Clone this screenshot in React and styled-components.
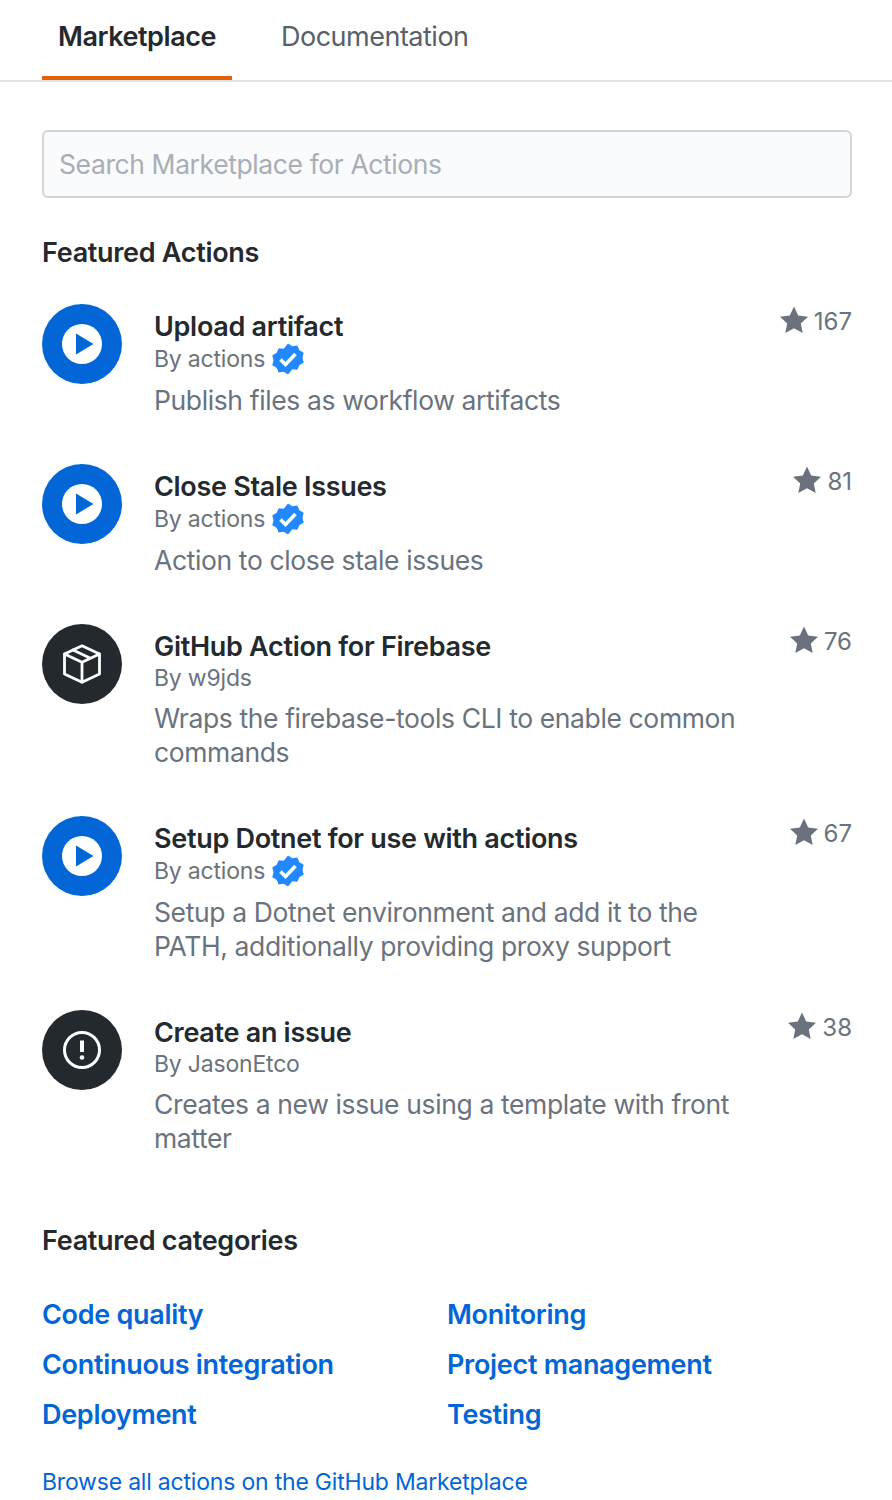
import React from "react";
import styled, { createGlobalStyle } from "styled-components";

const actions = [
  { title: "Upload artifact", by: "actions", verified: true, icon: "play", stars: 167, desc: "Publish files as workflow artifacts" },
  { title: "Close Stale Issues", by: "actions", verified: true, icon: "play", stars: 81, desc: "Action to close stale issues" },
  { title: "GitHub Action for Firebase", by: "w9jds", icon: "package", stars: 76, desc: "Wraps the firebase-tools CLI to enable common commands" },
  { title: "Setup Dotnet for use with actions", by: "actions", verified: true, icon: "play", stars: 67, desc: "Setup a Dotnet environment and add it to the PATH, additionally providing proxy support" },
  { title: "Create an issue", by: "JasonEtco", icon: "issue", stars: 38, desc: "Creates a new issue using a template with front matter" },
];

const categories = ["Code quality", "Monitoring", "Continuous integration", "Project management", "Deployment", "Testing"];

const PlayIcon = () => (
  <svg width="40" height="40" viewBox="0 0 40 40">
    <circle cx="20" cy="20" r="20" fill="#fff" />
    <path d="M14 9.500v21L31.500 20z" fill="#0366d6" />
  </svg>
);

const PackageIcon = () => (
  <svg width="40" height="40" viewBox="0 0 40 40" fill="none" stroke="#fff" strokeWidth="2.800" strokeLinejoin="round" strokeLinecap="round">
    <path d="M20 1.800 37.500 10v20L20 38.200 2.500 30V10z" />
    <path d="M2.500 10 20 18.200 37.500 10M20 18.200v20M11 6l17.500 8.200" />
  </svg>
);

const IssueIcon = () => (
  <svg width="40" height="40" viewBox="0 0 40 40" fill="none">
    <circle cx="20" cy="20" r="17.500" stroke="#fff" strokeWidth="3" />
    <path d="M20 10.500v11.500" stroke="#fff" strokeWidth="4" />
    <circle cx="20" cy="27.500" r="2.300" fill="#fff" />
  </svg>
);

const Verified = () => (
  <svg width="32" height="32" viewBox="0 0 32 32">
    <path
      d="M16 .5l4.300 2.700 5-.6 2.100 4.600 4.300 2.600-1.200 4.900 1.200 4.900-4.300 2.600-2.100 4.600-5-.6L16 31.500l-4.300-2.700-5 .6-2.100-4.600L.3 22.200l1.200-4.900-1.200-4.900 4.300-2.600 2.100-4.600 5 .6z"
      fill="#2188ff"
    />
    <path d="M8.500 16.500l5 5 10-10.500" fill="none" stroke="#fff" strokeWidth="3.600" />
  </svg>
);

const Star = () => (
  <StarIcon width="28" height="28" viewBox="0 0 28 28">
    <path d="M14 .5l4.200 9 9.800 1.200-7.200 6.700 1.900 9.700L14 22.300l-8.700 4.800 1.900-9.700L0 10.700l9.800-1.200z" fill="#6a737d" />
  </StarIcon>
);

const icons = { play: <PlayIcon />, package: <PackageIcon />, issue: <IssueIcon /> };

const App = () => (
  <Page>
    <GlobalStyle />
    <Tabs>
      <Tab $active>Marketplace</Tab>
      <Tab>Documentation</Tab>
    </Tabs>
    <Content>
      <Search placeholder="Search Marketplace for Actions" readOnly />
      <Heading>Featured Actions</Heading>
      <List>
        {actions.map((a) => (
          <Row key={a.title}>
            <Avatar $icon={a.icon}>{icons[a.icon]}</Avatar>
            <Body>
              <Title>{a.title}</Title>
              <By $verified={a.verified}>
                By {a.by}
                {a.verified && <Verified />}
              </By>
              <Desc>{a.desc}</Desc>
            </Body>
            <Stars>
              <Star />
              {a.stars}
            </Stars>
          </Row>
        ))}
      </List>
      <CategoryHeading>Featured categories</CategoryHeading>
      <Categories>
        {categories.map((c) => (
          <Category key={c}>{c}</Category>
        ))}
      </Categories>
      <Browse>Browse all actions on the GitHub Marketplace</Browse>
    </Content>
  </Page>
);

const GlobalStyle = createGlobalStyle`
  body {
    margin: 0;
    background: #fff;
    font-family: Inter, "Liberation Sans", sans-serif;
    color: #24292e;
  }
`;

const Page = styled.div`
  width: 892px;
  height: 1500px;
  overflow: hidden;
`;

const Tabs = styled.div`
  display: flex;
  gap: 33px;
  height: 80px;
  padding-left: 42px;
  border-bottom: 2px solid #e1e4e8;
`;

const Tab = styled.div`
  padding: 0 16px;
  height: 80px;
  box-sizing: border-box;
  line-height: 74px;
  font-size: 27px;
  letter-spacing: ${(p) => (p.$active ? "-0.45px" : "-0.5px")};
  font-weight: ${(p) => (p.$active ? 600 : 400)};
  color: ${(p) => (p.$active ? "#24292e" : "#586069")};
  border-bottom: 4px solid ${(p) => (p.$active ? "#e36209" : "transparent")};
`;

const Content = styled.div`
  padding: 48px 40px 0 42px;
`;

const Search = styled.input`
  display: block;
  width: 100%;
  height: 68px;
  box-sizing: border-box;
  padding: 0 15px;
  background: #fafbfc;
  border: 2px solid #d1d5da;
  border-radius: 6px;
  outline: none;
  font: 400 26.5px Inter, sans-serif;
  letter-spacing: -0.4px;
  &::placeholder {
    color: #a8aeb5;
    opacity: 1;
  }
`;

const Heading = styled.h2`
  margin: 38px 0 0;
  font-size: 27px;
  line-height: 34px;
  font-weight: 600;
  letter-spacing: -0.3px;
`;

const List = styled.div`
  margin-top: 34px;
`;

const Row = styled.div`
  display: flex;
  align-items: flex-start;
  padding-bottom: 47px;
`;

const Avatar = styled.div`
  flex: none;
  width: 80px;
  height: 80px;
  margin-right: 32px;
  border-radius: 50%;
  display: flex;
  align-items: center;
  justify-content: center;
  background: ${(p) => (p.$icon === "play" ? "#0366d6" : "#24292e")};
`;

const Body = styled.div`
  flex: 1;
  min-width: 0;
  padding-top: 7px;
`;

const Title = styled.div`
  font-size: 27px;
  line-height: 32px;
  font-weight: 600;
  letter-spacing: -0.3px;
`;

const By = styled.div`
  display: flex;
  align-items: center;
  gap: 7px;
  height: ${(p) => (p.$verified ? 32 : 30)}px;
  font-size: 23px;
  letter-spacing: -0.2px;
  color: #6a737d;
  margin-bottom: 8px;
`;

const Desc = styled.div`
  max-width: 590px;
  font-size: 26.5px;
  line-height: 34px;
  letter-spacing: -0.38px;
  color: #6a737d;
`;

const Stars = styled.div`
  flex: none;
  display: flex;
  align-items: center;
  gap: 6px;
  margin-top: 2px;
  height: 30px;
  font-size: 24px;
  color: #6a737d;
`;

const StarIcon = styled.svg`
  margin-top: -2px;
`;

const CategoryHeading = styled(Heading)`
  margin-top: 22px;
`;

const Categories = styled.div`
  display: grid;
  grid-template-columns: 405px 1fr;
  grid-auto-rows: 50px;
  margin-top: 32px;
`;

const Category = styled.a`
  font-size: 27px;
  line-height: 50px;
  font-weight: 600;
  letter-spacing: -0.3px;
  color: #0366d6;
`;

const Browse = styled.a`
  display: block;
  margin-top: 27px;
  font-size: 23px;
  line-height: 30px;
  letter-spacing: -0.2px;
  color: #0366d6;
`;

export default App;
